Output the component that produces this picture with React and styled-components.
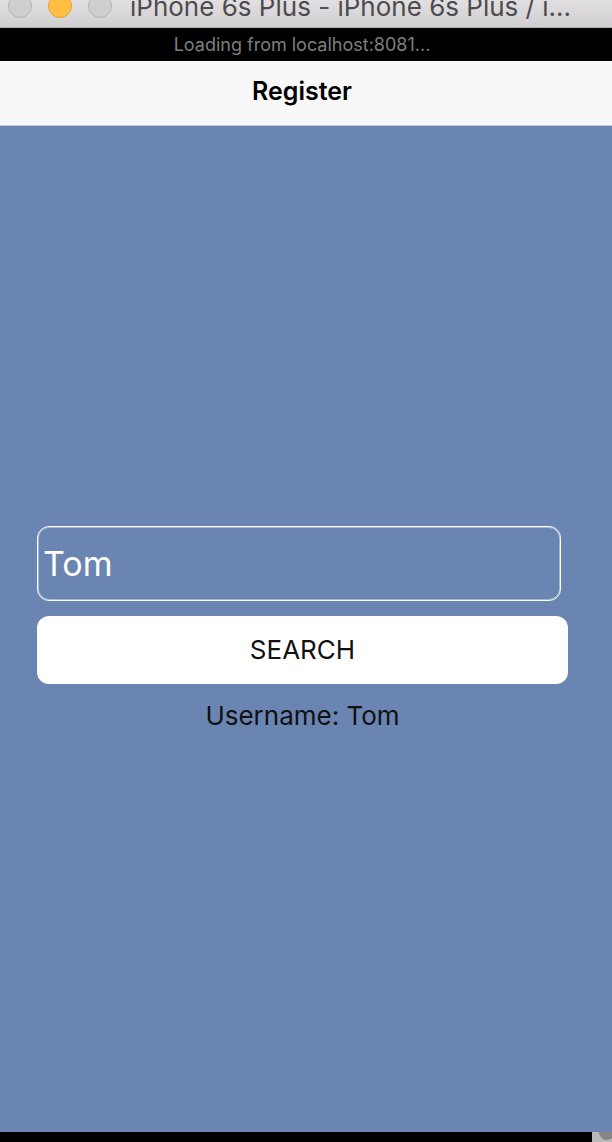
import React, { useState } from "react";
import styled, { createGlobalStyle } from "styled-components";

const GlobalStyle = createGlobalStyle`
  * { box-sizing: border-box; }
  body {
    margin: 0;
    font-family: Inter, "Liberation Sans", sans-serif;
    background: #000;
  }
`;

const Window = styled.div`
  display: flex;
  flex-direction: column;
  min-height: 100vh;
`;

const TitleBar = styled.header`
  display: flex;
  align-items: flex-end;
  gap: 18px;
  height: 28px;
  padding: 0 8px;
  overflow: hidden;
  background: linear-gradient(#e2dfe2, #d0cfd0);
  border-bottom: 1px solid #b1b0b1;
`;

const WindowControls = styled.div`
  display: flex;
  gap: 16px;
  padding-bottom: 9px;
`;

const WindowButton = styled.button`
  width: 24px;
  height: 24px;
  padding: 0;
  border: 1px solid ${(p) => (p.$active ? "#e1a032" : "#b1b0b1")};
  border-radius: 50%;
  background: ${(p) => (p.$active ? "#ffbf41" : "#cfcfcf")};
`;

const WindowTitle = styled.div`
  padding-bottom: 6px;
  font-size: 26px;
  line-height: 28px;
  white-space: nowrap;
  color: #4e4b4e;
`;

const LoadingBar = styled.div`
  height: 33px;
  font-size: 18px;
  line-height: 34px;
  text-align: center;
  padding-right: 8px;
  background: #000;
  color: #7f7f7f;
`;

const NavBar = styled.nav`
  display: flex;
  align-items: center;
  justify-content: center;
  height: 65px;
  padding: 0 8px 4px 0;
  background: #f8f8f8;
  border-bottom: 1px solid #c4c8cc;
`;

const NavTitle = styled.h1`
  margin: 0;
  font-size: 25px;
  line-height: 32px;
  font-weight: 600;
  color: #000;
`;

const Screen = styled.main`
  display: flex;
  flex: 1;
  flex-direction: column;
  justify-content: center;
  padding: 0 44px 0 37px;
  background: #6a85b1;
`;

const SearchForm = styled.form`
  display: flex;
  flex-direction: column;
  gap: 15px;
`;

const NameInput = styled.input`
  height: 75px;
  min-width: 0;
  margin-right: 7px;
  padding: 0 5px;
  border: 1px solid #fff;
  border-radius: 12px;
  outline: none;
  box-shadow: inset 0 0 0 1px rgba(255, 255, 255, 0.4);
  background: transparent;
  color: #fff;
  font: inherit;
  font-size: 34px;
`;

const SearchButton = styled.button`
  height: 68px;
  padding: 0;
  border: 0;
  border-radius: 12px;
  background: #fff;
  color: #111;
  font: inherit;
  font-size: 26px;
`;

const Result = styled.p`
  margin: 15px 0 0;
  font-size: 26px;
  line-height: 34px;
  text-align: center;
  color: #111;
`;

const BottomEdge = styled.footer`
  display: flex;
  justify-content: flex-end;
  height: 10px;
  background: #000;
`;

const Corner = styled.svg`
  width: 20px;
  height: 10px;
`;

export default function App() {
  const [name, setName] = useState("Tom");
  const [username, setUsername] = useState("Tom");

  const search = (event) => {
    event.preventDefault();
    setUsername(name);
  };

  return (
    <Window>
      <GlobalStyle />
      <TitleBar>
        <WindowControls>
          <WindowButton type="button" aria-label="Close" />
          <WindowButton type="button" aria-label="Minimize" $active />
          <WindowButton type="button" aria-label="Zoom" />
        </WindowControls>
        <WindowTitle>iPhone 6s Plus - iPhone 6s Plus / i…</WindowTitle>
      </TitleBar>
      <LoadingBar role="status">Loading from localhost:8081...</LoadingBar>
      <NavBar>
        <NavTitle>Register</NavTitle>
      </NavBar>
      <Screen>
        <SearchForm onSubmit={search}>
          <NameInput
            aria-label="Username"
            value={name}
            onChange={(event) => setName(event.target.value)}
          />
          <SearchButton type="submit">SEARCH</SearchButton>
        </SearchForm>
        <Result>Username: {username}</Result>
      </Screen>
      <BottomEdge>
        <Corner viewBox="0 0 20 10" aria-hidden="true">
          <rect width="20" height="10" fill="#b9b9b9" />
          <circle cx="15" cy="0" r="8" fill="#858585" />
        </Corner>
      </BottomEdge>
    </Window>
  );
}
